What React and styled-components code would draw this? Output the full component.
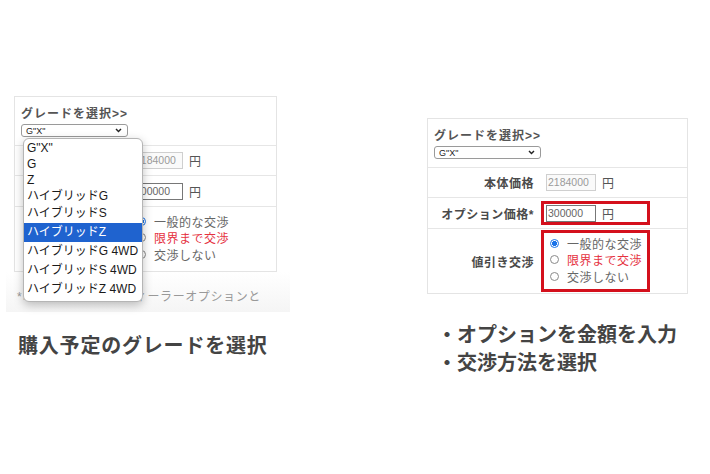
import React from "react";
import styled, { createGlobalStyle } from "styled-components";

const GlobalStyle = createGlobalStyle`
  * { box-sizing: border-box; }
  body {
    margin: 0;
    background: #fff;
    font-family: "Liberation Sans", "Noto Sans CJK JP", sans-serif;
  }
`;

const Page = styled.div`
  display: grid;
  grid-template-columns: 427px 1fr;
  width: 710px;
  height: 474px;
  overflow: hidden;
  background: #fff;
`;

const Column = styled.div`
  display: flex;
  flex-direction: column;
  padding-top: ${(p) => p.$top}px;
  padding-left: ${(p) => p.$left || 0}px;
`;

const Panel = styled.div`
  width: ${(p) => p.$width}px;
  border: 1px solid #e4e4e4;
  background: #fff;
`;

const GradeRow = styled.div`
  height: 48px;
  padding: 10px 6px 0;
`;

const GradeLabel = styled.div`
  font-size: 12px;
  line-height: 14px;
  font-weight: 700;
  color: #555;
  letter-spacing: 1px;
`;

const SelectWrap = styled.div`
  position: relative;
  width: 107px;
  margin-top: 3px;
`;

const Select = styled.div`
  display: flex;
  align-items: center;
  justify-content: space-between;
  height: 13px;
  padding: 0 5px 0 4px;
  border: 1px solid #9a9a9a;
  border-radius: 3px;
  font-size: 9px;
  color: #222;
  background: #fff;
`;

const DropList = styled.div`
  position: absolute;
  top: 14px;
  left: 2px;
  z-index: 2;
  width: 120px;
  padding: 1px 0 2px;
  background: #fff;
  border: 1px solid #b5b5b5;
  border-radius: 6px;
  box-shadow: 0 3px 10px rgba(0, 0, 0, 0.25);
  overflow: hidden;
`;

const DropItem = styled.div`
  height: ${(p) => (p.$compact ? 16 : 19)}px;
  line-height: ${(p) => (p.$compact ? 16 : 19)}px;
  padding-left: 3px;
  font-size: 12px;
  white-space: nowrap;
  color: ${(p) => (p.$active ? "#fff" : "#1a1a1a")};
  background: ${(p) => (p.$active ? "#1f63cf" : "transparent")};
`;

const Row = styled.div`
  display: grid;
  grid-template-columns: 113px 1fr;
  align-items: center;
  height: ${(p) => p.$h}px;
  border-top: 1px solid #e6e6e6;
`;

const Label = styled.div`
  padding-right: 7px;
  text-align: right;
  font-size: 12px;
  font-weight: 700;
  color: #4a4a4a;
  letter-spacing: 0.5px;
`;

const Frame = styled.div`
  width: 109px;
  padding: ${(p) => (p.$stack ? "2px 0 0 2px" : "0 0 0 2px")};
  height: ${(p) => p.$h}px;
  border: 3px solid ${(p) => (p.$marked ? "#d4101c" : "transparent")};
  display: flex;
  flex-direction: ${(p) => (p.$stack ? "column" : "row")};
  align-items: ${(p) => (p.$stack ? "flex-start" : "center")};
`;

const Input = styled.div`
  width: 50px;
  height: 17px;
  line-height: 15px;
  padding-left: 1px;
  border: 1px solid ${(p) => (p.$focus ? "#777" : "#cfcfcf")};
  font-size: 10.5px;
  color: ${(p) => (p.$focus ? "#666" : "#9a9a9a")};
  background: ${(p) => (p.$focus ? "#fff" : "#fafafa")};
`;

const Unit = styled.span`
  margin-left: 6px;
  font-size: 12px;
  color: #555;
`;

const RadioItem = styled.div`
  display: flex;
  align-items: center;
  height: 16.5px;
  font-size: 12px;
  letter-spacing: 0.5px;
  color: ${(p) => (p.$warn ? "#e5323f" : "#666")};
`;

const RadioDot = styled.span`
  width: 9px;
  height: 9px;
  margin: 0 8px 0 4px;
  border-radius: 50%;
  border: 1px solid ${(p) => (p.$on ? "#1a73e8" : "#8a8a8a")};
  background: ${(p) =>
    p.$on ? "radial-gradient(circle, #1a73e8 45%, #fff 55%)" : "#fff"};
`;

const Note = styled.div`
  width: 284px;
  margin-left: -8px;
  padding: 19px 0 9px 11px;
  font-size: 12px;
  line-height: 12px;
  color: #999;
  letter-spacing: 0.6px;
  white-space: nowrap;
  background: linear-gradient(#fff, #f5f5f5);
`;

const Caption = styled.div`
  margin: ${(p) => p.$margin};
  font-family: "Noto Sans CJK JP", sans-serif;
  font-size: 20px;
  line-height: 28px;
  font-weight: 700;
  color: #444;
  letter-spacing: ${(p) => p.$spacing || 0}px;
`;

const Chevron = () => (
  <svg width="7" height="5" viewBox="0 0 7 5">
    <polyline points="1,1 3.5,3.6 6,1" fill="none" stroke="#222" strokeWidth="1.4" />
  </svg>
);

const grades = [
  "G\"X\"",
  "G",
  "Z",
  "ハイブリッドG",
  "ハイブリッドS",
  "ハイブリッドZ",
  "ハイブリッドG 4WD",
  "ハイブリッドS 4WD",
  "ハイブリッドZ 4WD",
];

const options = [
  { text: "一般的な交渉", on: true },
  { text: "限界まで交渉", warn: true },
  { text: "交渉しない" },
];

const GradeForm = ({ open, marked, width }) => (
  <Panel $width={width}>
    <GradeRow>
      <GradeLabel>グレードを選択&gt;&gt;</GradeLabel>
      <SelectWrap>
        <Select>
          <span>G"X"</span>
          <Chevron />
        </Select>
        {open && (
          <DropList>
            {grades.map((g, i) => (
              <DropItem key={g} $compact={i < 4} $active={i === 5}>
                {g}
              </DropItem>
            ))}
          </DropList>
        )}
      </SelectWrap>
    </GradeRow>
    <Row $h={30}>
      <Label>本体価格</Label>
      <Frame $h={24}>
        <Input>2184000</Input>
        <Unit>円</Unit>
      </Frame>
    </Row>
    <Row $h={31}>
      <Label>オプション価格*</Label>
      <Frame $h={24} $marked={marked}>
        <Input $focus>300000</Input>
        <Unit>円</Unit>
      </Frame>
    </Row>
    <Row $h={65}>
      <Label>値引き交渉</Label>
      <Frame $h={62} $marked={marked} $stack>
        {options.map((o) => (
          <RadioItem key={o.text} $warn={o.warn}>
            <RadioDot $on={o.on} />
            {o.text}
          </RadioItem>
        ))}
      </Frame>
    </Row>
  </Panel>
);

export default function App() {
  return (
    <Page>
      <GlobalStyle />
      <Column $top={96} $left={14}>
        <GradeForm open width={263} />
        <Note>*オプション価格はディーラーオプションと</Note>
        <Caption $margin="19px 0 0 4px" $spacing={0.8}>
          購入予定のグレードを選択
        </Caption>
      </Column>
      <Column $top={118}>
        <GradeForm marked width={261} />
        <Caption $margin="26px 0 0 10px">・オプションを金額を入力</Caption>
        <Caption $margin="0 0 0 10px">・交渉方法を選択</Caption>
      </Column>
    </Page>
  );
}
